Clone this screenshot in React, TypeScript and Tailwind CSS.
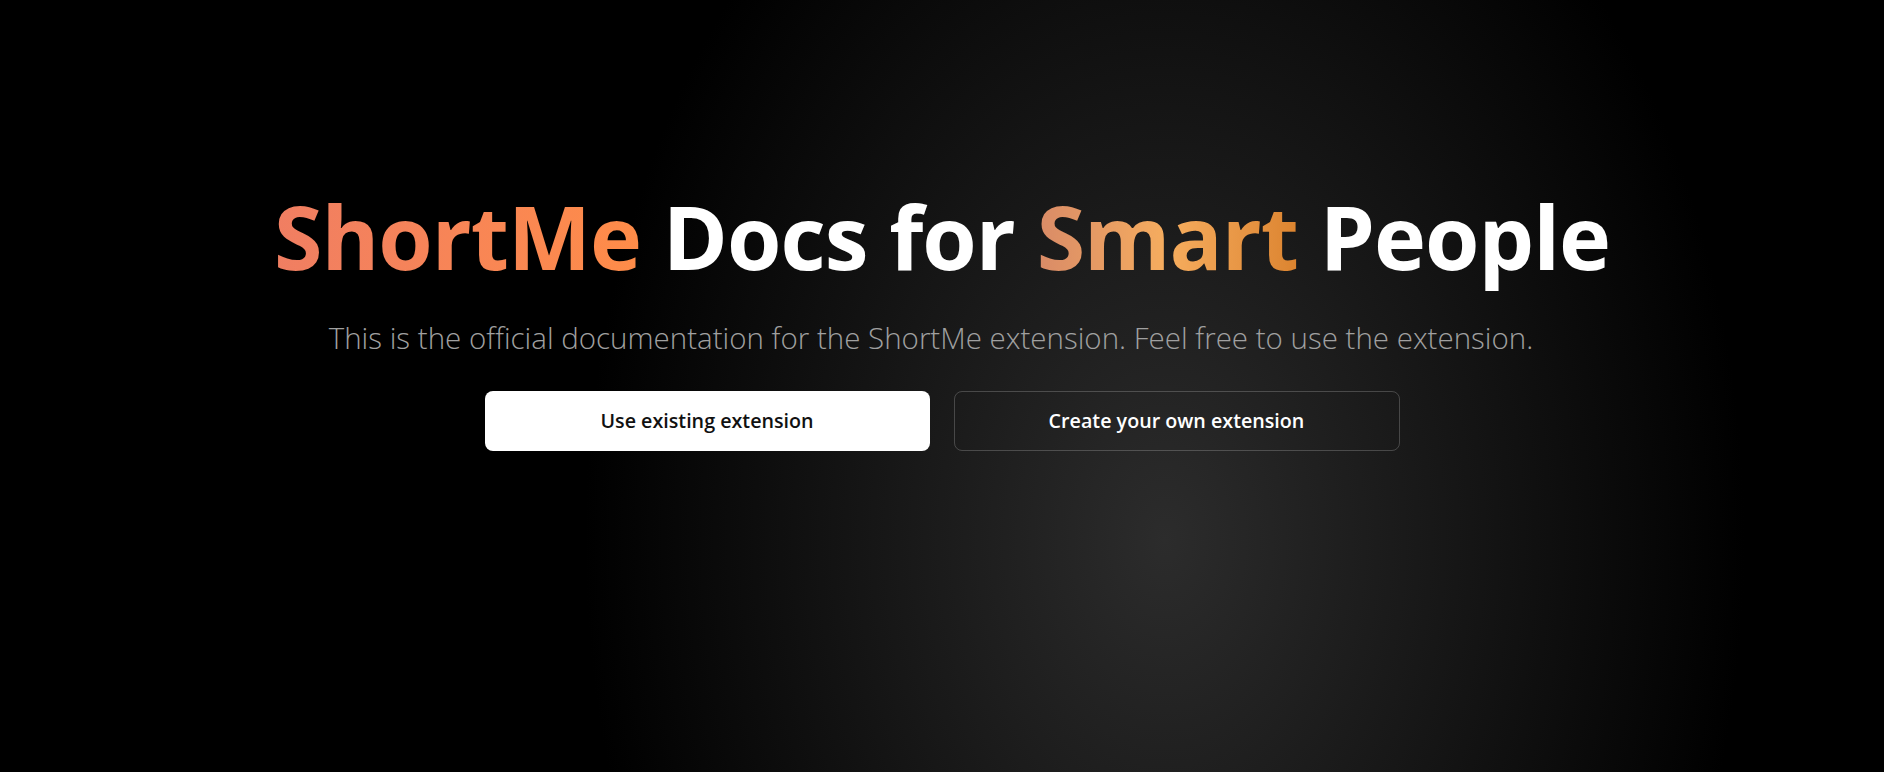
export default function App() {
  return (
    <div className="min-h-screen w-full bg-black bg-[radial-gradient(ellipse_580px_820px_at_1165px_540px,#2c2c2c_0%,#141414_55%,#000000_100%)] font-['Open_Sans',sans-serif]">
      <div className="flex flex-col items-center pt-[184px]">
        <h1 className="text-[88px] font-bold leading-[1.2] tracking-[-1px] text-white">
          <span className="bg-gradient-to-r from-[#f07e62] to-[#ff8c48] bg-clip-text text-transparent">
            ShortMe
          </span>{" "}
          Docs for{" "}
          <span className="bg-gradient-to-r from-[#d98b67] via-[#f6ad5e] to-[#dc842f] bg-clip-text text-transparent">
            Smart
          </span>{" "}
          People
        </h1>
        <p className="mt-[26px] pr-[22px] text-[29.5px] font-light text-[#a0a0a0]">
          This is the official documentation for the ShortMe extension. Feel free to use the extension.
        </p>
        <div className="mt-[31px] flex gap-6">
          <button className="h-[60px] w-[445px] rounded-lg bg-white text-[19.7px] font-semibold text-[#111]">
            Use existing extension
          </button>
          <button className="h-[60px] w-[446px] rounded-lg border border-white/20 bg-transparent text-[19.7px] font-semibold text-white">
            Create your own extension
          </button>
        </div>
      </div>
    </div>
  );
}
